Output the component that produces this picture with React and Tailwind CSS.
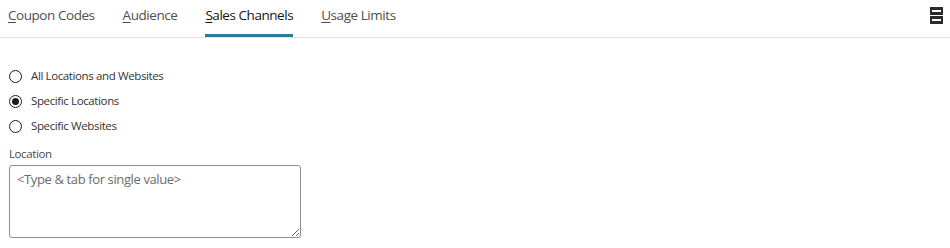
import React, { useState } from 'react';

const tabs = [
  { key: 'coupons', first: 'C', rest: 'oupon Codes' },
  { key: 'audience', first: 'A', rest: 'udience' },
  { key: 'channels', first: 'S', rest: 'ales Channels' },
  { key: 'limits', first: 'U', rest: 'sage Limits' },
];

const options = ['All Locations and Websites', 'Specific Locations', 'Specific Websites'];

const font = { fontFamily: '"Open Sans", "Noto Sans", sans-serif' };

const App = () => {
  const [active, setActive] = useState('channels');
  const [choice, setChoice] = useState(1);

  return (
    <div className="w-[950px] h-[248px] bg-white overflow-hidden" style={font}>
      {/* TAB BAR */}
      <div className="flex items-stretch h-[38px] border-b border-[#e3e3e3] pl-2 pr-[7px]">
        <div className="flex gap-7">
          {tabs.map((t) => (
            <div
              key={t.key}
              onClick={() => setActive(t.key)}
              className={`relative text-[13.5px] tracking-[-0.45px] leading-[16px] pt-[7px] h-full cursor-pointer ${
                active === t.key ? 'text-[#161513]' : 'text-[#4f4f4f]'
              }`}
            >
              <span className="underline underline-offset-2">{t.first}</span>
              {t.rest}
              {active === t.key && <span className="absolute left-0 right-0 bottom-0 h-[3px] bg-[#2b7c9b]" />}
            </div>
          ))}
        </div>
        <div className="ml-auto flex flex-col gap-px pt-[7px]">
          <span className="block w-[13px] h-[8px] border-x-2 border-y-[3px] border-[#2b2b2b] bg-white" />
          <span className="block w-[13px] h-[8px] border-x-2 border-y-[3px] border-[#2b2b2b] bg-white" />
        </div>
      </div>

      {/* RADIO GROUP */}
      <div className="pl-[9px] pt-[31px] flex flex-col gap-[11px]">
        {options.map((label, i) => (
          <label key={label} className="flex items-center gap-[9px] cursor-pointer" onClick={() => setChoice(i)}>
            <span className="w-[13px] h-[13px] rounded-full border border-[#1c1c1c] flex items-center justify-center">
              {choice === i && <span className="w-[7px] h-[7px] rounded-full bg-[#1c1c1c]" />}
            </span>
            <span className="text-[11.5px] tracking-[-0.38px] leading-[14px] text-[#333]">{label}</span>
          </label>
        ))}
      </div>

      {/* LOCATION FIELD */}
      <div className="pl-[9px] pt-[14px]">
        <div className="text-[11.5px] tracking-[-0.4px] leading-[14px] text-[#4a4a4a] mb-[4px]">Location</div>
        <textarea
          placeholder="<Type & tab for single value>"
          className="block w-[292px] h-[73px] border border-[#8e8e8e] rounded-[3px] px-[7px] pt-[4px] text-[13px] tracking-[-0.38px] text-[#333] placeholder:text-[#6b6b6b] outline-none resize"
          style={font}
        />
      </div>
    </div>
  );
};

export default App;
